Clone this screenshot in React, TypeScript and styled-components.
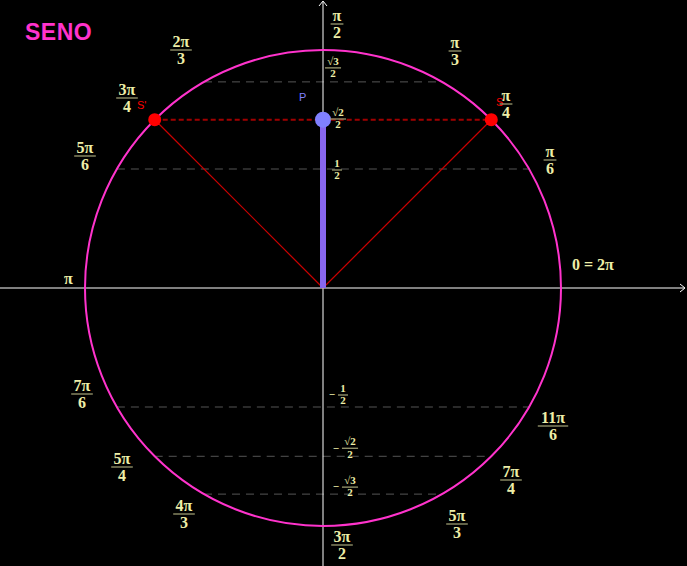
import styled, { createGlobalStyle } from 'styled-components'

const GlobalStyle = createGlobalStyle`
  body {
    margin: 0;
    background: #000;
    font-family: "Liberation Sans", Arial, sans-serif;
    overflow: hidden;
  }
`

const Canvas = styled.div`
  position: relative;
  width: 687px;
  height: 566px;
  background: #000;
`

const Title = styled.div`
  position: absolute;
  left: 25px;
  top: 19px;
  color: #ff33cc;
  font-weight: 700;
  font-size: 23px;
  letter-spacing: 0.5px;
`

const Board = styled.svg`
  display: block;
`

const CX = 323
const CY = 288
const R = 238

const labelColor = '#eeeea8'
const serif = '"Liberation Serif", "DejaVu Serif", serif'

type FracProps = { x: number; y: number; num: string; den: string; size?: number; minus?: boolean }

const Frac = ({ x, y, num, den, size = 16, minus }: FracProps) => {
  const w = Math.max(num.length, den.length) * size * 0.55 + 4
  return (
    <g fill={labelColor} fontFamily={serif} fontWeight={700} fontSize={size} textAnchor="middle">
      {minus && (
        <text x={x - w / 2 - 6} y={y + size * 0.3} fontSize={size}>
          −
        </text>
      )}
      <text x={x} y={y - 3}>{num}</text>
      <line x1={x - w / 2} x2={x + w / 2} y1={y} y2={y} stroke="#9a9a70" strokeWidth={1.3} />
      <text x={x} y={y + size * 0.85}>{den}</text>
    </g>
  )
}

const angleLabels = [
  { x: 337, y: 24, num: 'π', den: '2' },
  { x: 181, y: 50, num: '2π', den: '3' },
  { x: 455, y: 51, num: 'π', den: '3' },
  { x: 127, y: 98, num: '3π', den: '4' },
  { x: 506, y: 104, num: 'π', den: '4' },
  { x: 85, y: 156, num: '5π', den: '6' },
  { x: 550, y: 160, num: 'π', den: '6' },
  { x: 82, y: 394, num: '7π', den: '6' },
  { x: 553, y: 426, num: '11π', den: '6' },
  { x: 122, y: 467, num: '5π', den: '4' },
  { x: 511, y: 480, num: '7π', den: '4' },
  { x: 184, y: 514, num: '4π', den: '3' },
  { x: 457, y: 524, num: '5π', den: '3' },
  { x: 342, y: 545, num: '3π', den: '2' },
]

const sinLevels = [
  { v: Math.sqrt(3) / 2, num: '√3', lx: 333, dy: -14 },
  { v: 0.5, num: '1', lx: 337, dy: 1 },
  { v: -0.5, num: '1', lx: 343, dy: -12 },
  { v: -Math.SQRT1_2, num: '√2', lx: 350, dy: -8 },
  { v: -Math.sqrt(3) / 2, num: '√3', lx: 350, dy: -7 },
]

const App = () => {
  const s = R * Math.SQRT1_2
  const py = CY - s
  return (
    <Canvas>
      <GlobalStyle />
      <Board width={687} height={566} viewBox="0 0 687 566">
        {sinLevels.map((l, i) => {
          const y = CY - l.v * R
          const half = Math.sqrt(R * R - (l.v * R) ** 2)
          return (
            <g key={i}>
              <line x1={CX - half} x2={CX + half} y1={y} y2={y} stroke="#555" strokeDasharray="8 6" strokeWidth={1} />
              <Frac x={l.lx} y={y + l.dy} num={l.num} den="2" size={11} minus={l.v < 0} />
            </g>
          )
        })}
        <line x1={0} x2={684} y1={CY} y2={CY} stroke="#fff" strokeWidth={1} />
        <path d="M680 284 L685 288 L680 292" stroke="#fff" fill="none" />
        <line x1={CX} x2={CX} y1={2} y2={566} stroke="#fff" strokeWidth={1} />
        <path d="M319 6 L323 1 L327 6" stroke="#fff" fill="none" />
        <circle cx={CX} cy={CY} r={R} fill="none" stroke="#ff33cc" strokeWidth={2} />
        <line x1={CX} y1={CY} x2={CX + s} y2={py} stroke="#cc0000" strokeWidth={1.2} />
        <line x1={CX} y1={CY} x2={CX - s} y2={py} stroke="#cc0000" strokeWidth={1.2} />
        <line x1={CX - s} x2={CX + s} y1={py} y2={py} stroke="#a00000" strokeWidth={2} strokeDasharray="5 3" />
        <rect x={CX - 3} y={py} width={6} height={CY - py} fill="#8866ee" />
        <circle cx={CX} cy={py} r={8} fill="#8080ff" />
        <circle cx={CX + s} cy={py} r={6.5} fill="#ff0000" />
        <circle cx={CX - s} cy={py} r={6.5} fill="#ff0000" />
        <text x={299} y={101} fill="#8080ff" fontSize={11} fontFamily='"Liberation Sans", sans-serif'>P</text>
        <text x={137} y={109} fill="#ff0000" fontSize={11} fontFamily='"Liberation Sans", sans-serif'>S'</text>
        <text x={496} y={106} fill="#ff0000" fontSize={11} fontFamily='"Liberation Sans", sans-serif'>S</text>
        <Frac x={338} y={119} num="√2" den="2" size={11} />
        {angleLabels.map((l) => (
          <Frac key={l.num + l.den} x={l.x} y={l.y} num={l.num} den={l.den} />
        ))}
        <text x={64} y={284} fill={labelColor} fontFamily={serif} fontWeight={700} fontSize={16}>π</text>
        <text x={572} y={270} fill={labelColor} fontFamily={serif} fontWeight={700} fontSize={16}>0 = 2π</text>
      </Board>
      <Title>SENO</Title>
    </Canvas>
  )
}

export default App
